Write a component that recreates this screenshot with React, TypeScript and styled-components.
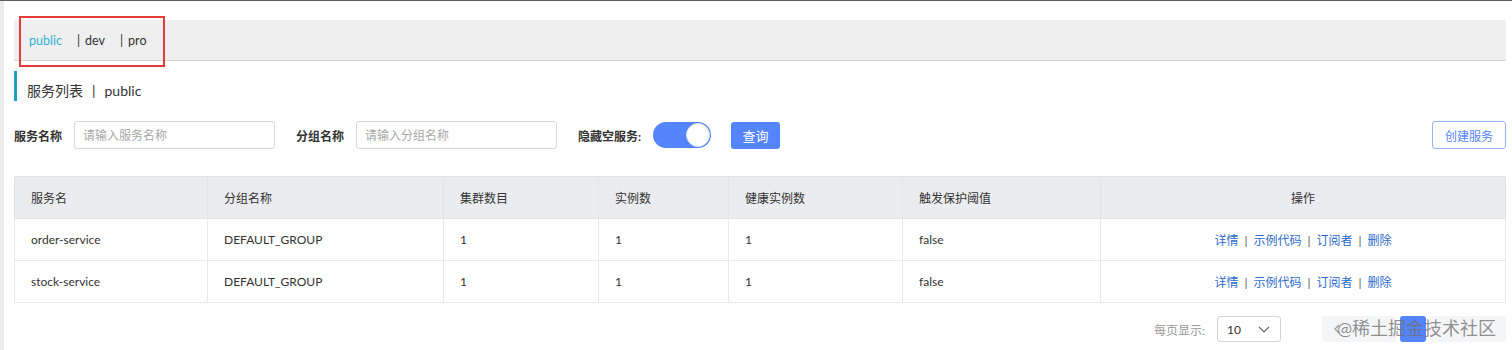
import * as React from 'react';
import styled, { createGlobalStyle } from 'styled-components';

const FONT = `Lato, "Noto Sans CJK SC", sans-serif`;

const GlobalStyle = createGlobalStyle`
  html, body {
    margin: 0;
    padding: 0;
    background: #fff;
  }
  body {
    font-family: ${FONT};
    color: #333;
    border-top: 1px solid #5c5c5c;
  }
  * { box-sizing: border-box; }
`;

interface Service {
  name: string;
  group: string;
  clusters: number;
  instances: number;
  healthy: number;
  threshold: string;
}

const services: Service[] = [
  { name: 'order-service', group: 'DEFAULT_GROUP', clusters: 1, instances: 1, healthy: 1, threshold: 'false' },
  { name: 'stock-service', group: 'DEFAULT_GROUP', clusters: 1, instances: 1, healthy: 1, threshold: 'false' },
];

const namespaces = ['public', 'dev', 'pro'];
const columns = [
  { title: '服务名', width: 193 },
  { title: '分组名称', width: 236 },
  { title: '集群数目', width: 155 },
  { title: '实例数', width: 130 },
  { title: '健康实例数', width: 174 },
  { title: '触发保护阈值', width: 198 },
  { title: '操作', width: 405, center: true },
];
const actions = ['详情', '示例代码', '订阅者', '删除'];

const App = () => (
  <Page>
    <GlobalStyle />
    <SideStrip />
    <Main>
      <NamespaceBar>
        {namespaces.map((ns, i) => (
          <NamespaceItem key={ns} active={i === 0}>
            {i > 0 && <Pipe>|</Pipe>}
            {ns}
          </NamespaceItem>
        ))}
        <Highlight />
      </NamespaceBar>

      <Title>
        服务列表<TitleSep>|</TitleSep>public
      </Title>

      <FilterRow>
        <FieldLabel>服务名称</FieldLabel>
        <Input placeholder="请输入服务名称" />
        <FieldLabel>分组名称</FieldLabel>
        <Input placeholder="请输入分组名称" />
        <FieldLabel>隐藏空服务:</FieldLabel>
        <Switch>
          <Knob />
        </Switch>
        <PrimaryButton>查询</PrimaryButton>
        <Spacer />
        <OutlineButton>创建服务</OutlineButton>
      </FilterRow>

      <Table>
        <colgroup>
          {columns.map((c) => (
            <col key={c.title} style={{ width: c.width }} />
          ))}
        </colgroup>
        <thead>
          <tr>
            {columns.map((c) => (
              <Th key={c.title} center={c.center}>
                {c.title}
              </Th>
            ))}
          </tr>
        </thead>
        <tbody>
          {services.map((s) => (
            <tr key={s.name}>
              <Td>{s.name}</Td>
              <Td>{s.group}</Td>
              <Td>{s.clusters}</Td>
              <Td>{s.instances}</Td>
              <Td>{s.healthy}</Td>
              <Td>{s.threshold}</Td>
              <Td center>
                {actions.map((a, i) => (
                  <React.Fragment key={a}>
                    {i > 0 && <LinkSep>|</LinkSep>}
                    <ActionLink>{a}</ActionLink>
                  </React.Fragment>
                ))}
              </Td>
            </tr>
          ))}
        </tbody>
      </Table>

      <Pagination>
        <PageSizeLabel>每页显示:</PageSizeLabel>
        <Select>
          10
          <svg width="14" height="14" viewBox="0 0 14 14" fill="none">
            <path d="M2 5 L7 10 L12 5" stroke="#666" strokeWidth="1.1" />
          </svg>
        </Select>
        <Pager>
          <PagerButton>
            <svg width="10" height="10" viewBox="0 0 10 10" fill="none">
              <path d="M7 1 L3 5 L7 9" stroke="#999" strokeWidth="1.2" />
            </svg>
          </PagerButton>
          <PageNumber aria-label="page 1" />
          <PagerButton wide />
          <Watermark>@稀土掘金技术社区</Watermark>
        </Pager>
      </Pagination>
    </Main>
  </Page>
);

const Page = styled.div`
  display: flex;
  min-height: 349px;
`;

const SideStrip = styled.div`
  width: 4px;
  background: #ececec;
  flex-shrink: 0;
`;

const Main = styled.div`
  flex: 1;
  padding: 19px 7px 0 10px;
  display: flex;
  flex-direction: column;
`;

const NamespaceBar = styled.div`
  position: relative;
  height: 41px;
  background: #efefef;
  border-bottom: 1px solid #d2d2d2;
  display: flex;
  align-items: center;
  padding-left: 15px;
  gap: 15px;
  font-size: 12.5px;
`;

const NamespaceItem = styled.span<{ active?: boolean }>`
  color: ${(p) => (p.active ? '#2fb2d0' : '#333')};
`;

const Pipe = styled.span`
  margin-right: 5px;
`;

const Highlight = styled.div`
  position: absolute;
  left: 5px;
  top: -4px;
  width: 146px;
  height: 51px;
  border: 2px solid #e53a3a;
  pointer-events: none;
`;

const Title = styled.div`
  margin-top: 10px;
  height: 30px;
  border-left: 3px solid #1f9fc2;
  padding-left: 10px;
  display: flex;
  align-items: center;
  padding-top: 8px;
  font-size: 14px;
  color: #333;
`;

const TitleSep = styled.span`
  margin: 0 9px;
`;

const FilterRow = styled.div`
  margin-top: 20px;
  height: 28px;
  display: flex;
  align-items: center;
`;

const FieldLabel = styled.label`
  font-size: 12px;
  font-weight: 700;
  color: #333;
  margin-right: 12px;
`;

const Input = styled.input`
  width: 201px;
  height: 28px;
  border: 1px solid #d8d8d8;
  border-radius: 3px;
  padding: 0 8px;
  font-family: ${FONT};
  font-size: 12px;
  margin-right: 21px;
  outline: none;
  &::placeholder {
    color: #a8a8a8;
  }
`;

const Switch = styled.div`
  width: 58px;
  height: 26px;
  border-radius: 13px;
  background: #5584ff;
  position: relative;
  margin-right: 20px;
`;

const Knob = styled.div`
  position: absolute;
  right: 1px;
  top: 1px;
  width: 24px;
  height: 24px;
  border-radius: 50%;
  background: #fff;
  border: 1px solid #d6e0ff;
`;

const PrimaryButton = styled.button`
  width: 49px;
  height: 27px;
  border: none;
  border-radius: 3px;
  background: #5584ff;
  color: #fff;
  font-family: ${FONT};
  font-size: 13px;
`;

const Spacer = styled.div`
  flex: 1;
`;

const OutlineButton = styled.button`
  width: 74px;
  height: 28px;
  border: 1px solid #9ab3ff;
  border-radius: 3px;
  background: #fff;
  color: #5584ff;
  font-family: ${FONT};
  font-size: 12px;
`;

const Table = styled.table`
  margin-top: 27px;
  width: 1491px;
  border-collapse: collapse;
  table-layout: fixed;
  font-size: 12px;
  border: 1px solid #e4e5e8;
`;

const Th = styled.th<{ center?: boolean }>`
  height: 42px;
  background: #ebecf0;
  font-weight: 400;
  color: #333;
  text-align: ${(p) => (p.center ? 'center' : 'left')};
  padding: 0 16px;
  border: 1px solid #e2e3e7;
`;

const Td = styled.td<{ center?: boolean }>`
  height: 42px;
  color: #333;
  text-align: ${(p) => (p.center ? 'center' : 'left')};
  padding: 0 16px;
  border: 1px solid #e8e9ec;
`;

const ActionLink = styled.a`
  color: #2e6bcd;
  cursor: pointer;
`;

const LinkSep = styled.span`
  color: #555;
  margin: 0 6px;
`;

const Pagination = styled.div`
  margin-top: 13px;
  height: 26px;
  display: flex;
  align-items: center;
  justify-content: flex-end;
`;

const PageSizeLabel = styled.span`
  font-size: 12px;
  color: #999;
  margin-right: 12px;
`;

const Select = styled.div`
  width: 64px;
  height: 26px;
  border: 1px solid #d4d4d4;
  border-radius: 3px;
  display: flex;
  align-items: center;
  justify-content: space-between;
  padding: 0 9px 0 9px;
  font-size: 12px;
  color: #333;
  margin-right: 41px;
`;

const Pager = styled.div`
  position: relative;
  display: flex;
  align-items: center;
  gap: 4px;
  height: 26px;
`;

const PagerButton = styled.div<{ wide?: boolean }>`
  width: ${(p) => (p.wide ? 76 : 74)}px;
  height: 26px;
  background: #f4f5f7;
  border-radius: 3px;
  display: flex;
  align-items: center;
  padding-left: 10px;
`;

const PageNumber = styled.div`
  width: 26px;
  height: 26px;
  border-radius: 3px;
  background: #5584ff;
`;

const Watermark = styled.div`
  position: absolute;
  left: 15px;
  top: -3px;
  font-size: 18px;
  line-height: 30px;
  color: rgba(110, 110, 110, 0.75);
  white-space: nowrap;
  pointer-events: none;
`;

export default App;
